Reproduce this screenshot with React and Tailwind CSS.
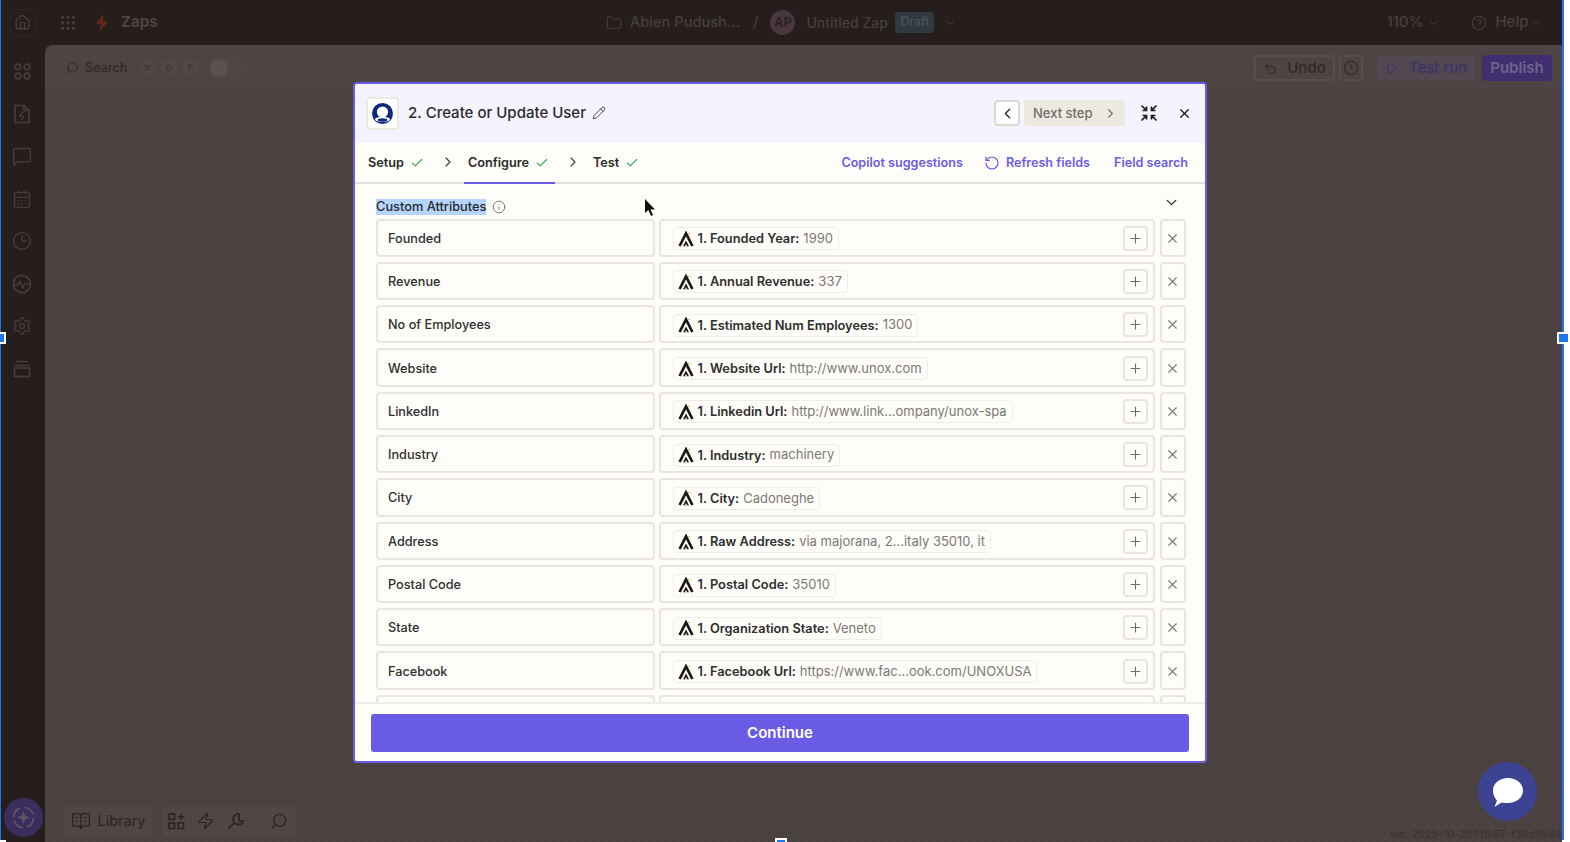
import React from "react";
import { X, Plus, ChevronDown, ChevronRight, ChevronLeft, Check, RotateCcw, Pencil, Info, House, Folder, CircleHelp, Undo2, Play, Search, BookOpenText, Zap, CalendarDays, Clock3, Settings, MessageSquare } from "lucide-react";

const rows = [
  ["Founded", "1. Founded Year:", "1990"],
  ["Revenue", "1. Annual Revenue:", "337"],
  ["No of Employees", "1. Estimated Num Employees:", "1300"],
  ["Website", "1. Website Url:", "http://www.unox.com"],
  ["LinkedIn", "1. Linkedin Url:", "http://www.link...ompany/unox-spa"],
  ["Industry", "1. Industry:", "machinery"],
  ["City", "1. City:", "Cadoneghe"],
  ["Address", "1. Raw Address:", "via majorana, 2...italy 35010, it"],
  ["Postal Code", "1. Postal Code:", "35010"],
  ["State", "1. Organization State:", "Veneto"],
  ["Facebook", "1. Facebook Url:", "https://www.fac...ook.com/UNOXUSA"],
  ["", "", ""],
];

function Apollo() {
  return (
    <svg width="16" height="16" viewBox="0 0 16 16" className="shrink-0" fill="none">
      <path d="M1.6 15 L8 2.4 L14.4 15" stroke="#1a1714" strokeWidth="2.7" />
      <path d="M5 15.2 L8 9.4 L11 15.2 Z" fill="#1a1714" />
      <path d="M6.9 15.2 L8 13 L9.1 15.2 Z" fill="#fffdf9" />
      <circle cx="11" cy="2.5" r="0.8" fill="#e8a33a" />
    </svg>
  );
}

function Row({ label, name, value }) {
  return (
    <div className="flex gap-[5px] shrink-0">
      <div className="w-[278.5px] h-[38.3px] border-2 border-[#e8e5dd] rounded-[4px] flex items-center pl-[10px] pt-[1px] text-[12.7px] font-medium text-[#2d2e2e]">
        {label}
      </div>
      <div className="w-[496.5px] ml-[-1px] h-[38.3px] border-2 border-[#e8e5dd] rounded-[4px] flex items-center pl-[12px] pr-[5px] justify-between">
        {name ? (
          <div className="h-[23px] mt-[2px] flex items-center gap-[4px] pl-[4px] pr-[5px] border border-[#efede7] rounded-[4px] text-[12.8px] whitespace-nowrap">
            <Apollo />
            <span className="font-semibold text-[#2d2e2e]">{name}</span>
            <span className="text-[13px] text-[#7a7975]">{value}</span>
          </div>
        ) : <span />}
        <div className="w-[25px] h-[25px] mt-[1px] border-2 border-[#e8e5dd] rounded-[4px] flex items-center justify-center text-[#6f6e6a] shrink-0">
          <Plus size={15} strokeWidth={1.8} />
        </div>
      </div>
      <div className="w-[26px] h-[38.3px] ml-[-0.5px] pt-[1px] border-2 border-[#e8e5dd] rounded-[4px] flex items-center justify-center text-[#7a7975] shrink-0">
        <X size={15} strokeWidth={1.8} />
      </div>
    </div>
  );
}

function TabCheck() {
  return <Check size={14} strokeWidth={2} className="text-[#3ea85a]" />;
}

function SideIcon({ children }) {
  return <div className="h-[42.5px] w-full pr-[2px] flex items-center justify-center text-[#463d3b]">{children}</div>;
}

function Sidebar() {
  return (
    <div className="w-[44px] shrink-0 flex flex-col items-center pt-[5px]">
      <SideIcon>
        <svg width="17" height="17" viewBox="0 0 17 17" fill="none" stroke="currentColor" strokeWidth="1.7">
          <circle cx="4" cy="4" r="2.8" /><circle cx="13" cy="4" r="2.8" /><circle cx="4" cy="13" r="2.8" /><circle cx="13" cy="13" r="2.8" />
        </svg>
      </SideIcon>
      <SideIcon>
        <svg width="18" height="20" viewBox="0 0 18 20" fill="none" stroke="currentColor" strokeWidth="1.7">
          <path d="M2 1.5 H11 L16 6.5 V18.5 H2 Z M11 1.5 V6.5 H16" />
          <path d="M9.8 8 L6.8 12.4 H11 L8.2 16" strokeWidth="1.4" />
        </svg>
      </SideIcon>
      <SideIcon><MessageSquare size={20} strokeWidth={1.7} /></SideIcon>
      <SideIcon><CalendarDays size={20} strokeWidth={1.7} /></SideIcon>
      <SideIcon><Clock3 size={20} strokeWidth={1.7} /></SideIcon>
      <SideIcon>
        <svg width="20" height="20" viewBox="0 0 20 20" fill="none" stroke="currentColor" strokeWidth="1.7">
          <circle cx="10" cy="10" r="8.6" />
          <path d="M1.6 11 H6 L8 7 L11 13.5 L13 10 H18.4" strokeWidth="1.5" />
        </svg>
      </SideIcon>
      <SideIcon><Settings size={20} strokeWidth={1.7} /></SideIcon>
      <SideIcon>
        <svg width="18" height="18" viewBox="0 0 18 18" fill="none" stroke="currentColor" strokeWidth="1.7">
          <path d="M3 1.5h12M1.5 5.5h15" /><rect x="1.5" y="8" width="15" height="8.5" />
        </svg>
      </SideIcon>
      <div className="mt-auto mb-[5px] w-[39px] h-[39px] rounded-full bg-[#3a2e5c] flex items-center justify-center text-[#5f5569]">
        <svg width="23" height="23" viewBox="0 0 23 23" fill="none" stroke="currentColor" strokeWidth="1.7">
          <circle cx="11.5" cy="11.5" r="10" strokeDasharray="12 3.7" />
          <path d="M11.5 5 L13.2 9.8 L18 11.5 L13.2 13.2 L11.5 18 L9.8 13.2 L5 11.5 L9.8 9.8 Z" fill="currentColor" stroke="none" />
        </svg>
      </div>
    </div>
  );
}

function TopBar() {
  return (
    <div className="h-[45px] shrink-0 flex items-center text-[15px] font-medium text-[#45403e] whitespace-nowrap">
      <div className="ml-[8px] w-[27px] h-[27px] rounded-[3px] border border-[#2e2624] flex items-center justify-center text-[#4c4341]">
        <House size={17} strokeWidth={1.6} />
      </div>
      <svg width="14" height="14" viewBox="0 0 14 14" className="ml-[25px] text-[#4c4341]" fill="currentColor">
        {[1.5, 7, 12.5].flatMap((y) => [1.5, 7, 12.5].map((x) => <circle key={x + "-" + y} cx={x} cy={y} r="1.4" />))}
      </svg>
      <svg width="14" height="18" viewBox="0 0 14 18" className="ml-[20px]" fill="#64291b">
        <path d="M8.5 0 L1 10 H6 L4.5 18 L13 7.5 H8 Z" />
      </svg>
      <span className="ml-[12px] w-[37px] font-bold text-[#4a4443]">Zaps</span>
      <Folder size={16} strokeWidth={1.5} className="ml-[448px]" />
      <span className="ml-[8px] w-[111px] text-[14.6px]">Abien Pudush...</span>
      <span className="ml-[12px] font-normal">/</span>
      <div className="ml-[12px] w-[25px] h-[25px] rounded-full bg-[#4a3740] text-[#26201f] text-[13px] font-semibold flex items-center justify-center">AP</div>
      <span className="ml-[11px] w-[80px] text-[14px]">Untitled Zap</span>
      <div className="ml-[9px] w-[39px] h-[21px] rounded-[3px] bg-[#303840] text-[#4a535c] text-[12.5px] flex items-center justify-center">Draft</div>
      <ChevronDown size={14} strokeWidth={1.6} className="ml-[9px]" />
      <span className="ml-[429px] w-[33px]">110%</span>
      <ChevronDown size={14} strokeWidth={1.6} className="ml-[8px]" />
      <CircleHelp size={16} strokeWidth={1.6} className="ml-[30px]" />
      <span className="ml-[8px] w-[30px]">Help</span>
      <ChevronDown size={14} strokeWidth={1.6} className="ml-[4px]" />
    </div>
  );
}

function Kbd({ children }) {
  return <div className="w-[15px] h-[15px] rounded-[2px] bg-[#504746] text-[#403837] text-[9px] font-semibold flex items-center justify-center">{children}</div>;
}

function Toolbar() {
  return (
    <div className="h-[46px] shrink-0 bg-[#4d4443] border-b border-[#463d3c] rounded-tl-[8px] flex items-center whitespace-nowrap text-[#2f2928]">
      <Search size={14} strokeWidth={1.7} className="ml-[20px] -scale-x-100" />
      <span className="ml-[6px] pt-[2px] text-[12.6px] font-medium w-[44px]">Search</span>
      <div className="ml-[11px] flex gap-[6.5px]">
        <Kbd>⌘</Kbd><Kbd>⇧</Kbd><Kbd>F</Kbd>
      </div>
      <div className="ml-[10px] w-[42px] h-[22px] rounded-full bg-[#4f4645] flex items-center pl-[2px]">
        <div className="w-[18px] h-[18px] rounded-full bg-[#5a5150]" />
      </div>
      <div className="ml-auto flex items-center h-[26px] mr-[10px]">
        <div className="w-[81px] h-[26px] pt-[1px] rounded-[4px] border-2 border-[#574e4d] flex items-center justify-center gap-[9px] text-[15px] font-medium">
          <Undo2 size={15} strokeWidth={1.6} />Undo
        </div>
        <div className="ml-[4px] w-[24px] h-[26px] rounded-[4px] border-2 border-[#574e4d] flex items-center justify-center">
          <Clock3 size={16} strokeWidth={1.6} />
        </div>
        <div className="ml-[14px] w-[98px] h-[26px] pt-[1px] rounded-[4px] bg-[#514852] flex items-center justify-center gap-[11px] text-[#3b3366] text-[15px] font-medium">
          <Play size={13} strokeWidth={1.8} />Test run
        </div>
        <div className="ml-[7px] w-[70px] h-[26px] pt-[1px] rounded-[4px] bg-[#3f2f6f] text-[#6d6588] text-[15px] font-semibold flex items-center justify-center">Publish</div>
      </div>
    </div>
  );
}

function BottomBar() {
  return (
    <div className="mt-auto mb-[6px] ml-[19px] flex items-center gap-[9px] text-[#2a2322]">
      <div className="h-[30px] w-[89px] bg-[#4f4645] rounded-[4px] flex items-center justify-center gap-[6px] text-[14.5px]">
        <BookOpenText size={20} strokeWidth={1.5} />Library
      </div>
      <div className="h-[30px] w-[135px] bg-[#4f4645] rounded-[4px] flex items-center pl-[6px]">
        <svg width="17" height="17" viewBox="0 0 17 17" fill="none" stroke="currentColor" strokeWidth="1.6">
          <rect x="1" y="1" width="5.5" height="5.5" /><rect x="1" y="10" width="5.5" height="5.5" /><rect x="10" y="10" width="5.5" height="5.5" /><path d="M13 0.5v6.5M9.7 3.7h6.6" />
        </svg>
        <Zap size={18} strokeWidth={1.6} className="ml-[12px]" />
        <svg width="18" height="18" viewBox="0 0 18 18" className="ml-[12px]" fill="none" stroke="currentColor" strokeWidth="1.7">
          <path d="M1 17 L6.5 11.5" />
          <path d="M12 2 A5.3 5.3 0 1 0 16.4 9 L12.5 9 L12 6 Z" />
        </svg>
        <Search size={18} strokeWidth={1.6} className="ml-[25px] -scale-x-100" />
      </div>
    </div>
  );
}

function Modal() {
  return (
    <div className="absolute left-[353px] top-[82px] w-[854px] h-[681px] border-2 border-[#6a5be5] rounded-[4px] bg-[#fffdf9] flex flex-col overflow-hidden">
      <div className="h-[58.5px] shrink-0 bg-[#f4f3ff] flex items-center pl-[11px]">
        <div className="w-[33px] h-[33px] bg-white border-2 border-[#ece9e1] rounded-[4px] flex items-center justify-center">
          <svg width="21" height="21" viewBox="0 0 21 21">
            <circle cx="10.5" cy="10.5" r="10.5" fill="#0d2a7d" />
            <circle cx="10.5" cy="9" r="5.6" fill="#fff" />
            <ellipse cx="10.5" cy="16.3" rx="7.5" ry="2.6" fill="#fff" />
            <ellipse cx="10.5" cy="17" rx="4.8" ry="1.7" fill="#0d2a7d" />
          </svg>
        </div>
        <span className="ml-[9px] text-[15px] font-medium text-[#2a2a2a] whitespace-nowrap">2. Create or Update User</span>
        <Pencil size={14} strokeWidth={1.6} className="ml-[6px] text-[#3a3a3a]" />
        <div className="ml-auto w-[26px] h-[26px] bg-white border-2 border-[#dcd9d1] rounded-[4px] flex items-center justify-center text-[#2a2a2a]">
          <ChevronLeft size={17} strokeWidth={1.9} />
        </div>
        <div className="ml-[4px] w-[101px] h-[26px] bg-[#ece9e0] rounded-[4px] flex items-center pl-[9px] text-[13px] font-medium text-[#6f6e6a] whitespace-nowrap">
          Next step
          <ChevronRight size={15} strokeWidth={1.8} className="ml-[10px]" />
        </div>
        <svg width="18" height="18" viewBox="0 0 18 18" className="ml-[15px]" fill="none" stroke="#1d1d1d" strokeWidth="1.7">
          <path d="M1.5 1.5 L6 6 M6.5 2.5v4H2.5M16.5 1.5 L12 6 M11.5 2.5v4h4M1.5 16.5 L6 12 M6.5 15.5v-4H2.5M16.5 16.5 L12 12 M11.5 15.5v-4h4" />
        </svg>
        <X size={15} strokeWidth={2.2} className="ml-[19px] mr-[13px] text-[#1d1d1d]" />
      </div>
      <div className="h-[41px] shrink-0 border-b-2 border-[#e3e0d9] flex items-center text-[12.7px] font-semibold text-[#2a2a2a] whitespace-nowrap">
        <span className="ml-[13px] pt-[1px]">Setup</span>
        <span className="ml-[6px] pt-[1px]"><TabCheck /></span>
        <ChevronRight size={16} strokeWidth={1.7} className="ml-[16px] text-[#3d3c39]" />
        <div className="ml-[8px] h-[41px] w-[91px] flex items-center pl-[4px] pt-[2px] gap-[6px] border-b-2 border-[#6a5be5] mb-[-2px]">
          Configure<TabCheck />
        </div>
        <ChevronRight size={16} strokeWidth={1.7} className="ml-[10px] text-[#3d3c39]" />
        <span className="ml-[12px] pt-[1px]">Test</span>
        <span className="ml-[6px] pt-[1px]"><TabCheck /></span>
        <div className="ml-auto flex items-center text-[12.6px] pt-[2px] text-[#6a5be5] mr-[17px]">
          <span>Copilot suggestions</span>
          <RotateCcw size={16} strokeWidth={1.8} className="ml-[21px]" />
          <span className="ml-[6px]">Refresh fields</span>
          <span className="ml-[24px]">Field search</span>
        </div>
      </div>
      <div className="flex-1 min-h-0 overflow-hidden flex flex-col gap-[5px] pl-[21px] pt-[15px] relative">
        <div className="flex items-center h-[16px] mb-[-1px] shrink-0 text-[12.8px] font-medium text-[#2a2a2a]">
          <span className="bg-[#b4d5fe] leading-[16px]">Custom Attributes</span>
          <Info size={14} strokeWidth={1.4} className="ml-[6px] text-[#5f5e5a]" />
        </div>
        <ChevronDown size={17} strokeWidth={1.9} className="absolute right-[25px] top-[10px] text-[#2d2e2e]" />
        <svg width="12" height="18" viewBox="0 0 12 18" className="absolute left-[289px] top-[15px]">
          <path d="M1 0 V14 L4.3 11 L7 17 L9 16 L6.5 10.4 H11 Z" fill="#111" />
        </svg>
        {rows.map((r, i) => <Row key={i} label={r[0]} name={r[1]} value={r[2]} />)}
      </div>
      <div className="h-[59px] shrink-0 border-t-2 border-[#efede7] bg-[#fffdf9] pt-[10px] pl-[16px] pr-[16px]">
        <div className="h-[38px] rounded-[3px] bg-[#6a5be5] text-white text-[15px] font-semibold flex items-center justify-center">Continue</div>
      </div>
    </div>
  );
}

function Handle({ className }) {
  return <div className={"absolute bg-[#1f74ef] border-2 border-white " + className} />;
}

export default function App() {
  return (
    <div className="relative w-[1570px] h-[842px] overflow-hidden bg-white" style={{ fontFamily: "Inter, 'Noto Sans', sans-serif" }}>
      <div className="w-[1564px] h-[842px] bg-[#261e1c] border-l-[1px] border-r-[2px] border-[#1f74ef] flex flex-col">
        <TopBar />
        <div className="flex-1 min-h-0 flex">
          <Sidebar />
          <div className="flex-1 min-w-0 bg-[#4b4241] rounded-tl-[8px] flex flex-col bg-[radial-gradient(#484040_1px,transparent_1px)] bg-[length:8px_8px]">
            <Toolbar />
            <BottomBar />
          </div>
        </div>
      </div>
      <Modal />
      <div className="absolute left-[1478px] top-[762px] w-[59px] h-[59px] rounded-full bg-[#3d4393] flex items-center justify-center">
        <svg width="32" height="32" viewBox="0 0 32 32">
          <path d="M16 2 C24 2 31 7 31 14.5 C31 22 24 27 16 27 C14 27 11 27 9.5 26.5 L2.5 31 L5 24.5 C2.5 22 1 18.5 1 14.5 C1 7 8 2 16 2 Z" fill="#fff" />
        </svg>
      </div>
      <div className="absolute left-[1390px] top-[828px] text-[10.8px] leading-[14px] text-[#3a3332] whitespace-nowrap">ver. 2025-10-28T15:57-f36d9545</div>
      <Handle className="left-[-6px] top-[332px] w-[12px] h-[12px]" />
      <Handle className="left-[1557px] top-[332px] w-[13px] h-[12px]" />
      <Handle className="left-[775px] top-[838px] w-[12px] h-[12px]" />
      <Handle className="left-[1562px] top-[840px] w-[8px] h-[12px]" />
      <Handle className="left-[-6px] top-[840px] w-[12px] h-[12px]" />
    </div>
  );
}
